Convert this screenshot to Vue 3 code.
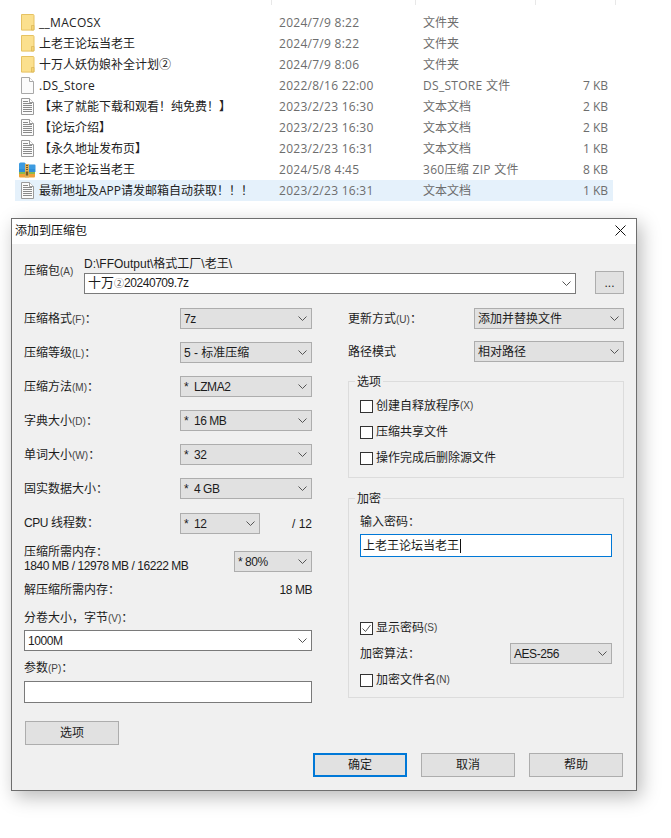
<script setup>
const files = [
  { icon: 'folder', name: '__MACOSX', date: '2024/7/9 8:22', type: '文件夹', size: '', wideName: true },
  { icon: 'folder', name: '上老王论坛当老王', date: '2024/7/9 8:22', type: '文件夹', size: '' },
  { icon: 'folder', name: '十万人妖伪娘补全计划②', date: '2024/7/9 8:06', type: '文件夹', size: '' },
  { icon: 'blank', name: '.DS_Store', date: '2022/8/16 22:00', type: 'DS_STORE 文件', size: '7 KB', wideName: true, wideType: true },
  { icon: 'doc', name: '【来了就能下载和观看！纯免费！】', date: '2023/2/23 16:30', type: '文本文档', size: '2 KB' },
  { icon: 'doc', name: '【论坛介绍】', date: '2023/2/23 16:30', type: '文本文档', size: '2 KB' },
  { icon: 'doc', name: '【永久地址发布页】', date: '2023/2/23 16:31', type: '文本文档', size: '1 KB' },
  { icon: 'zip', name: '上老王论坛当老王', date: '2024/5/8 4:45', type: '360压缩 ZIP 文件', size: '8 KB', wideType: true },
  { icon: 'doc', name: '最新地址及APP请发邮箱自动获取！！！', date: '2023/2/23 16:31', type: '文本文档', size: '1 KB', selected: true }
]
const leftRows = [
  { label: '压缩格式', key: '(F)', value: '7z', latin: true },
  { label: '压缩等级', key: '(L)', value: '5 - 标准压缩' },
  { label: '压缩方法', key: '(M)', value: '*  LZMA2', latin: true },
  { label: '字典大小', key: '(D)', value: '*  16 MB', latin: true },
  { label: '单词大小', key: '(W)', value: '*  32', latin: true },
  { label: '固实数据大小', key: '', value: '*  4 GB', latin: true }
]
const options = [
  { label: '创建自释放程序', key: '(X)' },
  { label: '压缩共享文件', key: '' },
  { label: '操作完成后删除源文件', key: '' }
]
const cpuValue = '*  12'
const memValue = '* 80%'
</script>

<template>
  <div class="page">
    <div class="ticks">
      <i style="width:272px"></i><i style="width:144px"></i><i style="width:120px"></i><i style="width:80px"></i>
    </div>
    <ul class="list">
      <li v-for="f in files" :key="f.name + f.date" class="file" :class="{ selected: f.selected }">
        <span class="icon">
          <svg v-if="f.icon === 'folder'" width="24" height="21" viewBox="0 0 24 21">
            <path d="M6.500 2.500h11.500a1 1 0 0 1 1 1v14a.6.6 0 0 1-.6.6H6.500z" fill="#fbe08e" stroke="#e6c262"/>
            <path d="M16.500 18v-4.500h2.500V18z" fill="#f5d372" stroke="#d9b455" stroke-width=".7"/>
          </svg>
          <svg v-else-if="f.icon === 'blank'" width="24" height="21" viewBox="0 0 24 21">
            <path d="M6.500 2.500h8l4 4v12h-12z" fill="#fbfbfb" stroke="#a8a8a8"/>
            <path d="M14.500 2.500v4h4" fill="#fff" stroke="#a8a8a8"/>
          </svg>
          <svg v-else-if="f.icon === 'doc'" width="24" height="21" viewBox="0 0 24 21">
            <path d="M6.500 2.500h8l4 4v12h-12z" fill="#fbfbfb" stroke="#9a9a9a"/>
            <path d="M14.500 2.500v4h4" fill="#fff" stroke="#9a9a9a"/>
            <path d="M8 5.500h5M8 7.500h9M8 9.500h9M8 11.500h9M8 13.500h9M8 15.500h9" stroke="#8a8a8a" fill="none"/>
          </svg>
          <svg v-else width="24" height="21" viewBox="0 0 24 21">
            <path d="M4 5a1.500 1.500 0 0 1 1.500-1.500h4l2 2h8a1 1 0 0 1 1 1V13H4z" fill="#3d9be0"/>
            <path d="M4 10h16v3H4z" fill="#2f8ed8"/>
            <path d="M4 13h16v2H4z" fill="#8fb84a"/>
            <path d="M4 15h16v2.500a1 1 0 0 1-1 1H5a1 1 0 0 1-1-1z" fill="#f0a23a"/>
            <path d="M10 5h4v13.500h-4z" fill="#e0b25e"/>
            <path d="M11 6h2v1h-2zM11 8h2v1h-2zM11 10h2v1h-2zM10.800 12.500h2.400v4h-2.400z" fill="#7a5a22"/>
          </svg>
        </span>
        <span class="name" :class="{ spaced: f.wideName }">{{ f.name }}</span>
        <span class="date">{{ f.date }}</span>
        <span class="type" :class="{ spaced: f.wideType }">{{ f.type }}</span>
        <span class="size">{{ f.size }}</span>
      </li>
    </ul>

    <section class="dialog">
      <header class="titlebar">
        <span>添加到压缩包</span>
        <svg class="close" width="11" height="11" viewBox="0 0 11 11">
          <path d="M.5.500l10 10M10.500.500l-10 10" stroke="#111" fill="none"/>
        </svg>
      </header>

      <div class="body">
        <div class="pkg">
          <div class="pkg-label">压缩包<span class="key">(A)</span></div>
          <div class="pkg-main">
            <div class="pkg-path">D:\FFOutput\格式工厂\老王\</div>
            <div class="combo edit pkg-combo">
              <span class="pkg-value">十万<small>②</small><span class="latin">20240709.7z</span></span>
              <svg class="chev" width="9" height="5" viewBox="0 0 9 5"><path d="M.5.500l4 4 4-4" /></svg>
            </div>
          </div>
          <div class="btn pkg-btn">...</div>
        </div>

        <div class="columns">
          <div class="left">
            <div v-for="r in leftRows" :key="r.label" class="row">
              <span class="label">{{ r.label }}<span class="key">{{ r.key }}</span>：</span>
              <div class="combo grow">
                <span class="val" :class="{ latin: r.latin }">{{ r.value }}</span>
                <svg class="chev" width="9" height="5" viewBox="0 0 9 5"><path d="M.5.500l4 4 4-4" /></svg>
              </div>
            </div>

            <div class="row cpu">
              <span class="label"><span class="latin">CPU </span>线程数：</span>
              <div class="combo cpu-combo">
                <span class="val latin">{{ cpuValue }}</span>
                <svg class="chev" width="9" height="5" viewBox="0 0 9 5"><path d="M.5.500l4 4 4-4" /></svg>
              </div>
              <span class="cpu-max">/ 12</span>
            </div>

            <div class="mem">
              <div>
                <div class="line">压缩所需内存：</div>
                <div class="line latin">1840 MB / 12978 MB / 16222 MB</div>
              </div>
              <div class="combo mem-combo">
                <span class="val latin">{{ memValue }}</span>
                <svg class="chev" width="9" height="5" viewBox="0 0 9 5"><path d="M.5.500l4 4 4-4" /></svg>
              </div>
            </div>

            <div class="line unpack"><span>解压缩所需内存：</span><span class="latin">18 MB</span></div>

            <div class="line split-label">分卷大小，字节<span class="key">(V)</span>：</div>
            <div class="combo edit split">
              <span class="val latin">1000M</span>
              <svg class="chev" width="9" height="5" viewBox="0 0 9 5"><path d="M.5.500l4 4 4-4" /></svg>
            </div>

            <div class="line param-label">参数<span class="key">(P)</span>：</div>
            <div class="param-input"></div>
            <div class="btn opt-btn">选项</div>
          </div>

          <div class="right">
            <div class="row r-first">
              <span class="r-label">更新方式<span class="key">(U)</span>：</span>
              <div class="combo grow">
                <span class="val">添加并替换文件</span>
                <svg class="chev" width="9" height="5" viewBox="0 0 9 5"><path d="M.5.500l4 4 4-4" /></svg>
              </div>
            </div>
            <div class="row r-second">
              <span class="r-label">路径模式</span>
              <div class="combo grow">
                <span class="val">相对路径</span>
                <svg class="chev" width="9" height="5" viewBox="0 0 9 5"><path d="M.5.500l4 4 4-4" /></svg>
              </div>
            </div>

            <div class="group group-opts">
              <span class="legend">选项</span>
              <label v-for="o in options" :key="o.label" class="check">
                <span class="box"></span>{{ o.label }}<span class="key">{{ o.key }}</span>
              </label>
            </div>

            <div class="group group-enc">
              <span class="legend">加密</span>
              <div class="line">输入密码：</div>
              <div class="password"><span>上老王论坛当老王</span><i class="caret"></i></div>
              <label class="check show-pass">
                <span class="box">
                  <svg width="11" height="11" viewBox="0 0 11 11"><path d="M1.500 5.500l3 3 5-6.500" fill="none" stroke="#555"/></svg>
                </span>显示密码<span class="key">(S)</span>
              </label>
              <div class="algo">
                <span>加密算法：</span>
                <div class="combo algo-combo">
                  <span class="val latin">AES-256</span>
                  <svg class="chev" width="9" height="5" viewBox="0 0 9 5"><path d="M.5.500l4 4 4-4" /></svg>
                </div>
              </div>
              <label class="check algo-name">
                <span class="box"></span>加密文件名<span class="key">(N)</span>
              </label>
            </div>
          </div>
        </div>

        <footer class="footer">
          <div class="btn primary">确定</div>
          <div class="btn">取消</div>
          <div class="btn">帮助</div>
        </footer>
      </div>
    </section>
  </div>
</template>

<style scoped>
.page {
  width: 671px;
  height: 838px;
  background: #fff;
  overflow: hidden;
  font-family: "Liberation Sans", "Noto Sans CJK SC", sans-serif;
  font-size: 12px;
  line-height: 14px;
  color: #1c1c1c;
}
.latin { font-size: 12px; letter-spacing: -0.45px; }
.ticks { display: flex; height: 5px; margin-bottom: 7px; }
.ticks i { display: block; box-sizing: border-box; border-right: 1px solid #e8e8e8; }
.list { list-style: none; margin: 0 0 0 15px; padding: 0; width: 598px; }
.file {
  display: flex;
  align-items: center;
  height: 21px;
  font-family: "Open Sans", "Noto Sans CJK SC", sans-serif;
  line-height: 21px;
  color: #6d6d6d;
}
.file.selected { background: #e5f1fb; }
.icon { width: 24px; height: 21px; flex: none; }
.icon svg { display: block; }
.name { width: 240px; flex: none; color: #222; white-space: nowrap; }
.date { width: 144px; flex: none; letter-spacing: 0.27px; }
.type { width: 120px; flex: none; white-space: nowrap; }
.spaced { letter-spacing: 0.3px; }
.size { flex: 1; text-align: right; padding-right: 5px; }

.dialog {
  box-sizing: border-box;
  width: 626px;
  height: 573px;
  margin: 17px 0 0 11px;
  border: 1px solid #6e6e6e;
  background: #f0f0f0;
  box-shadow: 4px 6px 18px rgba(0, 0, 0, 0.28);
}
.titlebar {
  display: flex;
  align-items: center;
  justify-content: space-between;
  height: 25px;
  padding: 0 10px 2px 3px;
  box-sizing: border-box;
  background: #fff;
  color: #111;
}
.body { padding: 13px 12px 0; }

.key { font-size: 10px; color: #444; }
.pkg { display: flex; align-items: flex-start; }
.pkg-label { width: 60px; flex: none; margin-top: 7px; }
.pkg-main { width: 492px; flex: none; }
.pkg-path { height: 14px; margin-bottom: 2px; }
.pkg-combo { height: 20px; }
.pkg-value { padding-left: 3px; font-size: 13px; }
.pkg-value small { font-size: 10px; color: #555; }
.pkg-btn { width: 29px; height: 23px; margin: 14px 0 0 19px; }

.columns { display: flex; gap: 36px; margin-top: 14px; }
.left { width: 288px; flex: none; }
.right { width: 276px; flex: none; }

.row { display: flex; align-items: center; height: 21px; margin-bottom: 13px; }
.label { width: 156px; flex: none; padding-top: 2px; }
.r-label { width: 126px; flex: none; }
.r-first { margin-bottom: 12px; }
.r-first .r-label { padding-top: 2px; }
.r-second { margin-bottom: 19px; }
.grow { flex: 1; }

.combo {
  box-sizing: border-box;
  display: flex;
  align-items: center;
  justify-content: space-between;
  height: 21px;
  background: #e1e1e1;
  border: 1px solid #adadad;
}
.combo.edit { background: #fff; border-color: #7a7a7a; }
.val { padding-left: 3px; white-space: pre; }
.chev { flex: none; margin-right: 4px; }
.chev path { fill: none; stroke: #555; }

.left .row:nth-child(6) { margin-bottom: 14px; }
.cpu { margin: 0 0 11px; }
.cpu .label { padding: 0 0 2px; }
.cpu-combo { width: 80px; }
.cpu-max { margin-left: auto; }

.mem { display: flex; justify-content: space-between; height: 28px; }
.mem-combo { width: 78px; margin-top: 6px; }
.line { height: 14px; white-space: nowrap; }
.unpack { display: flex; justify-content: space-between; margin-top: 10px; }
.split-label { margin-top: 14px; }
.split { margin-top: 5px; }
.param-label { margin-top: 10px; }
.param-input {
  box-sizing: border-box;
  height: 22px;
  margin-top: 6px;
  background: #fff;
  border: 1px solid #7a7a7a;
}

.btn {
  box-sizing: border-box;
  display: flex;
  align-items: center;
  justify-content: center;
  width: 94px;
  height: 24px;
  background: #e1e1e1;
  border: 1px solid #adadad;
}
.opt-btn { margin: 18px 0 0 1px; }
.pkg-btn { width: 29px; height: 23px; }
.primary { border: 2px solid #0078d7; }

.group {
  position: relative;
  box-sizing: border-box;
  padding: 11px 11px 0;
  border: 1px solid #dcdcdc;
}
.legend {
  position: absolute;
  top: -7px;
  left: 6px;
  padding: 0 2px;
  background: #f0f0f0;
}
.group-opts { height: 97px; }
.group-enc { height: 200px; margin-top: 20px; padding-top: 16px; }

.check { display: flex; align-items: center; height: 26px; }
.box {
  box-sizing: border-box;
  display: block;
  flex: none;
  width: 13px;
  height: 13px;
  margin-right: 3px;
  background: #fff;
  border: 1px solid #333;
}
.box svg { display: block; margin: 0; }

.password {
  box-sizing: border-box;
  display: flex;
  align-items: center;
  width: 252px;
  height: 23px;
  margin-top: 5px;
  padding-left: 2px;
  background: #fff;
  border: 1px solid #0078d7;
}
.caret { display: block; width: 1px; height: 14px; margin-left: 1px; background: #111; }
.show-pass { margin-top: 58px; }
.algo { display: flex; align-items: center; justify-content: space-between; width: 252px; height: 21px; margin-top: 2px; }
.algo-combo { width: 102px; }
.algo-name { margin-top: 3px; }

.footer { display: flex; justify-content: flex-end; gap: 14px; margin: 8px 1px 0 0; }
</style>
